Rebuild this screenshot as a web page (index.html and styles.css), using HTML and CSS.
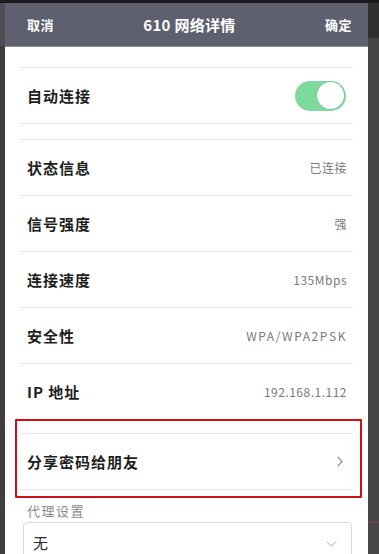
FILE: index.html
```html
<!DOCTYPE html>
<html lang="zh-CN">
<head>
<meta charset="utf-8">
<title>610 网络详情</title>
<link rel="stylesheet" href="styles.css">
</head>
<body>
<div class="screen">
  <div class="edge edge-left">
    <div class="edge-top"></div>
  </div>
  <div class="dialog">
    <header class="bar">
      <span class="bar-btn">取消</span>
      <span class="bar-title">610 网络详情</span>
      <span class="bar-btn">确定</span>
    </header>
    <div class="content">
      <ul class="group">
        <li class="row">
          <span class="label">自动连接</span>
          <span class="switch"><span class="knob"></span></span>
        </li>
      </ul>
      <ul class="group group-gap">
        <li class="row"><span class="label">状态信息</span><span class="value">已连接</span></li>
        <li class="row"><span class="label">信号强度</span><span class="value">强</span></li>
        <li class="row"><span class="label">连接速度</span><span class="value">135Mbps</span></li>
        <li class="row"><span class="label">安全性</span><span class="value value-wide">WPA/WPA2PSK</span></li>
        <li class="row"><span class="label">IP 地址</span><span class="value">192.168.1.112</span></li>
      </ul>
      <div class="share">
        <ul class="group group-flush">
          <li class="row">
            <span class="label">分享密码给朋友</span>
            <svg class="chev-right" width="6" height="11" viewBox="0 0 6 11"><path d="M0.8 0.8 L5 5.5 L0.8 10.2" fill="none" stroke="#8a8a8a" stroke-width="1.2"/></svg>
          </li>
        </ul>
        <div class="highlight"></div>
      </div>
      <div class="field-label">代理设置</div>
      <div class="select">
        <span class="select-text">无</span>
        <svg class="chev-down" width="11" height="6" viewBox="0 0 11 6"><path d="M0.6 0.6 L5.5 5 L10.4 0.6" fill="none" stroke="#c4c4c4" stroke-width="1.1"/></svg>
      </div>
    </div>
  </div>
  <div class="edge edge-right">
    <div class="edge-top"></div>
    <div class="edge-mid"></div>
    <div class="edge-line"></div>
    <div class="edge-rest"></div>
  </div>
</div>
</body>
</html>
```

FILE: styles.css
```css
* { box-sizing: border-box; }
html, body {
  margin: 0;
  padding: 0;
  width: 379px;
  height: 554px;
  overflow: hidden;
  background: #444;
  font-family: "Noto Sans CJK SC", "Noto Sans", sans-serif;
}
.screen {
  display: flex;
  height: 554px;
  border-top: 3px solid #1b1b1d;
}
.edge { display: flex; flex-direction: column; flex-shrink: 0; }
.edge > div { flex-shrink: 0; }
.edge-left { width: 5px; background: #3e3e3e; }
.edge-left .edge-top { height: 43px; background: #4c4c52; }
.edge-right { width: 11px; background: #454545; }
.edge-right .edge-top { height: 35px; background: #2f2f2f; }
.edge-right .edge-mid { height: 483px; background: #454545; }
.edge-right .edge-line { height: 2px; background: #6a4444; }
.edge-right .edge-rest { flex: 1; background: #474747; }

.dialog {
  width: 363px;
  flex-shrink: 0;
  background: #fff;
  display: flex;
  flex-direction: column;
  overflow: hidden;
}
.bar {
  height: 44px;
  flex-shrink: 0;
  background: #5e6070;
  border-bottom: 1px solid #8c8e99;
  display: flex;
  align-items: center;
  justify-content: space-between;
  padding: 0 16px 0 22px;
  color: #fff;
  font-weight: 700;
}
.bar-btn { font-size: 13px; letter-spacing: 0.5px; }
.bar-title { font-size: 15px; letter-spacing: 0.3px; }

.content {
  flex-shrink: 0;
  padding: 20px 0 0;
  display: flex;
  flex-direction: column;
}
.content > * { flex-shrink: 0; }
.group {
  list-style: none;
  margin: 0 15px;
  padding: 0;
  border-top: 1px solid #e6e6e6;
}
.group-gap { margin-top: 15px; }
.group-flush { margin: 0; }
.row {
  height: 56px;
  border-bottom: 1px solid #e6e6e6;
  display: flex;
  align-items: center;
  justify-content: space-between;
  padding: 0 6px 0 7px;
}
.label {
  font-size: 15px;
  font-weight: 700;
  color: #1e1e1e;
  letter-spacing: 1px;
}
.value {
  font-size: 12px;
  color: #7a7a7a;
  letter-spacing: 0.5px;
}
.value-wide { letter-spacing: 1.6px; }

.switch {
  width: 51px;
  height: 30px;
  border-radius: 15px;
  background: #7ed99c;
  display: flex;
  align-items: center;
  justify-content: flex-end;
  padding-right: 2px;
  margin-right: 1px;
}
.knob {
  width: 27px;
  height: 27px;
  border-radius: 50%;
  background: #fff;
  box-shadow: 0 0 0 0.5px #6cc88a;
}

.share {
  position: relative;
  margin: 13px 15px 0;
}
.chev-right { margin-right: 4px; }
.highlight {
  position: absolute;
  top: -14px;
  left: -5px;
  right: -9px;
  bottom: -8px;
  border: 2px solid #d10f16;
  border-radius: 1px;
  pointer-events: none;
}

.field-label {
  margin: 12px 0 0 22px;
  font-size: 13px;
  line-height: 18px;
  color: #8a8a8a;
  letter-spacing: 1.5px;
}
.select {
  margin: 2px 16px 0 18px;
  height: 48px;
  border: 1px solid #dcdcdc;
  border-radius: 4px;
  display: flex;
  align-items: flex-start;
  justify-content: space-between;
  padding: 0 14px 0 9px;
}
.select-text {
  font-size: 15px;
  line-height: 40px;
  color: #2a2a2a;
}
.chev-down { margin-top: 18px; }
```
